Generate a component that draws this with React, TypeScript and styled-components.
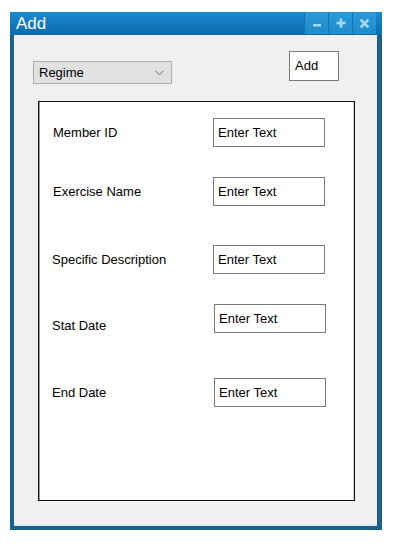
import React from "react";
import styled, { createGlobalStyle } from "styled-components";

const Global = createGlobalStyle`
  html, body { margin: 0; padding: 0; background: #ffffff; }
  body { font-family: "Liberation Sans", Arial, sans-serif; }
`;

const Page = styled.div`
  padding: 12px 0 0 10px;
`;

const Window = styled.div`
  width: 372px;
  height: 518px;
  display: flex;
  flex-direction: column;
  background: #1d5f8a;
  box-sizing: border-box;
`;

const TitleBar = styled.div`
  height: 23px;
  display: flex;
  align-items: stretch;
  background: linear-gradient(#1a8ad0, #1277bb 60%, #0f6aa8);
  padding-right: 6px;
`;

const Title = styled.div`
  flex: 1;
  color: #ffffff;
  font-size: 17px;
  line-height: 23px;
  padding-left: 6px;
`;

const TitleButton = styled.div`
  width: 23px;
  height: 22px;
  background: linear-gradient(#2a9ad8, #1f8ccc);
  border-left: 1px solid #1673b0;
  display: flex;
  align-items: center;
  justify-content: center;
`;

const Body = styled.div`
  flex: 1;
  margin: 0 5px 4px 4px;
  background: #f0f0f0;
  border-bottom: 2px solid #d8ecf8;
  display: flex;
  flex-direction: column;
`;

const TopRow = styled.div`
  display: flex;
  justify-content: space-between;
  align-items: flex-start;
  height: 50px;
`;

const Dropdown = styled.div`
  margin: 26px 0 0 19px;
  width: 139px;
  height: 23px;
  box-sizing: border-box;
  background: #e1e1e1;
  border: 1px solid #adadad;
  display: flex;
  align-items: center;
  justify-content: space-between;
  padding: 0 7px 0 5px;
  font-size: 13px;
  color: #000;
`;

const AddButton = styled.div`
  margin: 16px 38px 0 0;
  width: 50px;
  height: 30px;
  box-sizing: border-box;
  background: #ffffff;
  border: 1px solid #7a7a7a;
  font-size: 13px;
  padding: 6px 0 0 5px;
  color: #000;
`;

const Panel = styled.div`
  margin: 16px 0 0 24px;
  width: 317px;
  height: 400px;
  box-sizing: border-box;
  background: #ffffff;
  border: 1px solid #111;
  box-shadow: inset 1px 0 0 #9a9a9a, inset -1px 0 0 #cfcfcf;
  padding-top: 16px;
  display: flex;
  flex-direction: column;
`;

const Row = styled.div<{ $top: number; $inputShift?: number; $labelShift?: number; $labelX?: number }>`
  display: flex;
  align-items: center;
  height: 29px;
  margin-top: ${(p) => p.$top}px;

  & > span {
    width: ${(p) => 160 - (p.$labelX ?? 0)}px;
    padding-left: ${(p) => 14 + (p.$labelX ?? 0)}px;
    font-size: 13px;
    color: #000;
    position: relative;
    top: ${(p) => p.$labelShift ?? 0}px;
  }
  & > div {
    margin-left: ${(p) => p.$inputShift ?? 0}px;
  }
`;

const Input = styled.div`
  width: 112px;
  height: 29px;
  box-sizing: border-box;
  border: 1px solid #7a7a7a;
  background: #fff;
  font-size: 13px;
  padding: 6px 0 0 4px;
  color: #000;
`;

const iconColor = "#a9d9f2";

const rows = [
  { label: "Member ID", top: 0, labelX: 0 },
  { label: "Exercise Name", top: 30, labelX: 0 },
  { label: "Specific Description", top: 39, labelX: -1 },
  { label: "Stat Date", top: 30, labelX: -1, inputShift: 1, labelShift: 7 },
  { label: "End Date", top: 45, labelX: -1, inputShift: 1 },
];

export default function App() {
  return (
    <>
      <Global />
      <Page>
        <Window>
          <TitleBar>
            <Title>Add</Title>
            <TitleButton>
              <svg width="10" height="10" viewBox="0 0 10 10">
                <rect x="1" y="6" width="8" height="2.5" fill={iconColor} />
              </svg>
            </TitleButton>
            <TitleButton>
              <svg width="10" height="10" viewBox="0 0 10 10">
                <rect x="3.7" y="0.5" width="2.6" height="9" fill={iconColor} />
                <rect x="0.5" y="3.7" width="9" height="2.6" fill={iconColor} />
              </svg>
            </TitleButton>
            <TitleButton>
              <svg width="11" height="11" viewBox="0 0 10 10">
                <path d="M1.5 1.5 L8.5 8.5 M8.5 1.5 L1.5 8.5" stroke={iconColor} strokeWidth="2.4" />
              </svg>
            </TitleButton>
          </TitleBar>
          <Body>
            <TopRow>
              <Dropdown>
                <span>Regime</span>
                <svg width="9" height="6" viewBox="0 0 9 6">
                  <path d="M0.5 0.8 L4.5 4.8 L8.5 0.8" fill="none" stroke="#666" strokeWidth="1" />
                </svg>
              </Dropdown>
              <AddButton>Add</AddButton>
            </TopRow>
            <Panel>
              {rows.map((r) => (
                <Row
                  key={r.label}
                  $top={r.top}
                  $labelX={r.labelX}
                  $inputShift={r.inputShift}
                  $labelShift={r.labelShift}
                >
                  <span>{r.label}</span>
                  <Input>Enter Text</Input>
                </Row>
              ))}
            </Panel>
          </Body>
        </Window>
      </Page>
    </>
  );
}
